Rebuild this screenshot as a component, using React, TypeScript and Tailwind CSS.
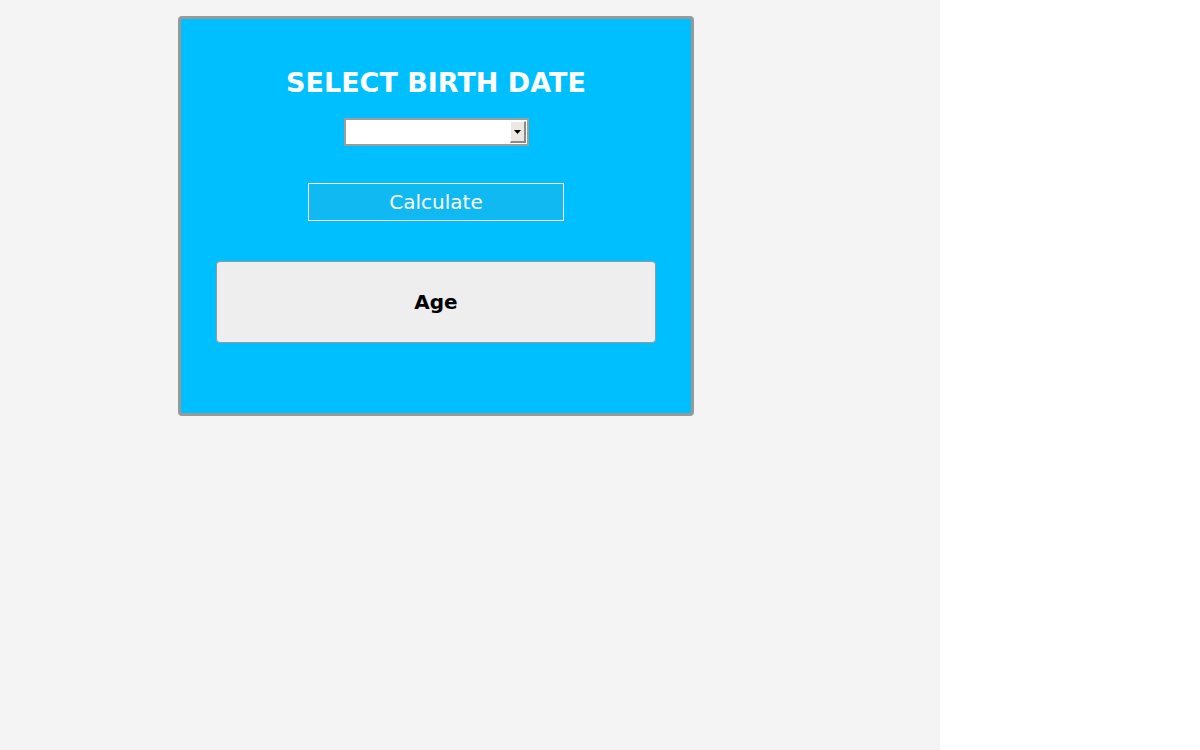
const App = () => {
  return (
    <div className="flex min-h-screen w-full bg-white font-['DejaVu_Sans',sans-serif]">
      {/* Left gray panel */}
      <div className="w-[940px] min-h-screen bg-[#f4f4f4] pt-[16px] pl-[178px]">
        {/* Card */}
        <div className="w-[516px] h-[400px] bg-[#00bfff] border-[3px] border-[#999999] rounded-[4px] flex flex-col items-center pt-[49px]">
          <h1 className="text-[27px] leading-[30px] font-bold text-white">SELECT BIRTH DATE</h1>

          {/* Fake select */}
          <div className="mt-[20px] w-[185px] h-[28px] border-2 border-[#9c9c9c] bg-white flex justify-end items-stretch p-[1px]">
            <div className="w-[16px] bg-[#ece9e4] border-t border-l border-t-white border-l-white border-r-2 border-b-2 border-r-[#8a8a8a] border-b-[#8a8a8a] flex items-center justify-center">
              <svg width="7" height="4" viewBox="0 0 7 4">
                <path d="M0 0h7L3.5 4z" fill="#000" />
              </svg>
            </div>
          </div>

          <button className="mt-[37px] w-[256px] h-[38px] border border-white bg-[#10b9f2] text-white text-[20px] leading-[36px]">
            Calculate
          </button>

          <div className="mt-[40px] w-[440px] h-[82px] bg-[#eeeeee] border border-[#999999] rounded-[4px] flex items-center justify-center">
            <span className="text-[20px] font-bold text-black">Age</span>
          </div>
        </div>
      </div>
      <div className="flex-1" />
    </div>
  );
};

export default App;
